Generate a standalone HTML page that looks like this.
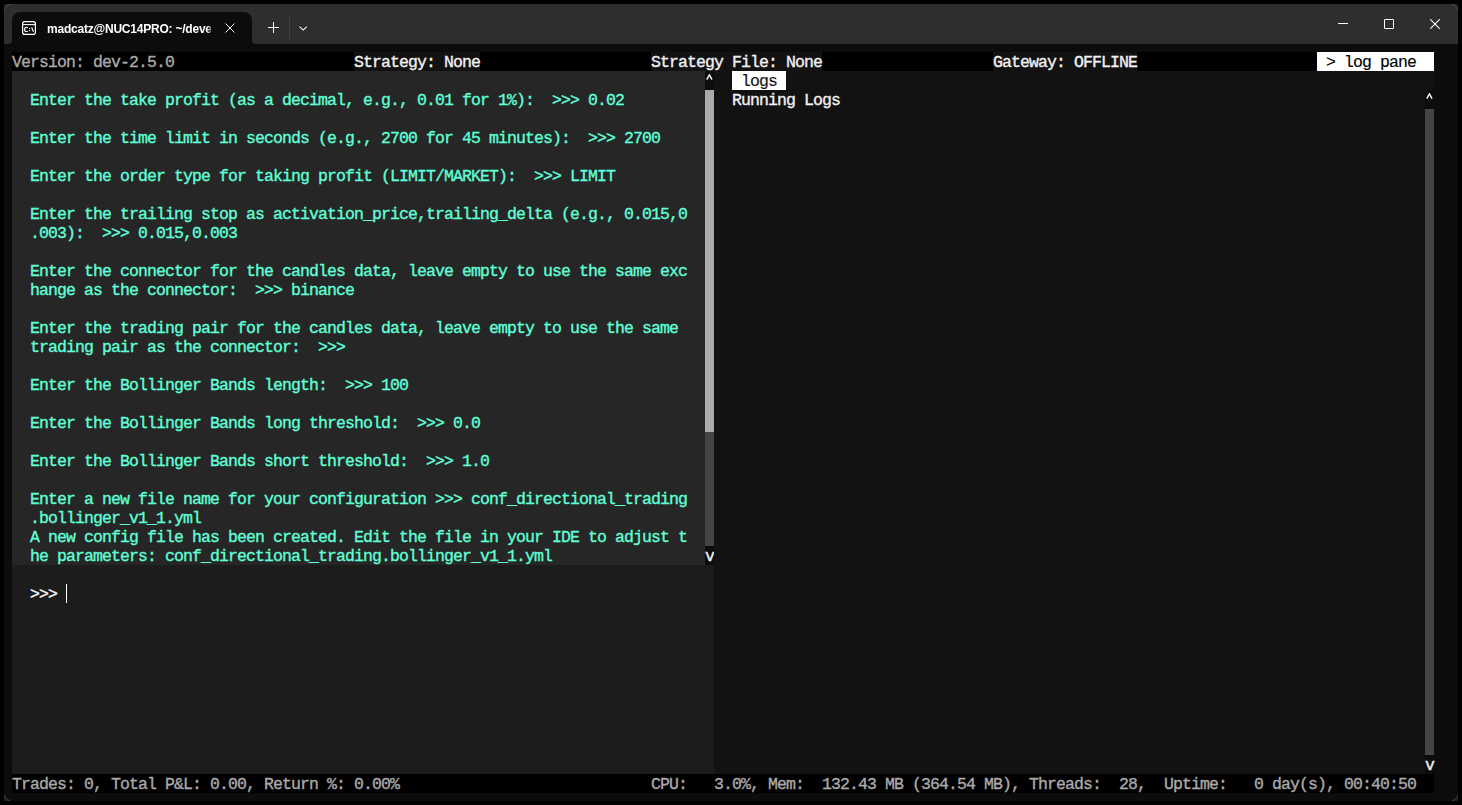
<!DOCTYPE html>
<html><head><meta charset="utf-8"><style>
html,body{margin:0;padding:0;}
body{width:1462px;height:805px;background:#000;position:relative;overflow:hidden;}
#win{position:absolute;left:4px;top:4px;width:1454px;height:797px;background:#0c0c0c;overflow:hidden;}
#term{position:absolute;left:-4px;top:-4px;width:1462px;height:805px;}
#term div{position:absolute;}
.t{font-family:"Liberation Mono",monospace;font-size:16.5px;letter-spacing:-0.9015px;line-height:19px;-webkit-text-stroke:0.35px currentColor;white-space:pre;height:19px;}
#tb{position:absolute;left:0;top:0;width:1454px;height:40px;background:#2e2e2e;}
.abs{position:absolute;}
</style></head><body>
<div id="win">
<div class="abs" style="left:0;top:0;width:8px;height:40px;background:#2e2e2e;border-bottom-right-radius:4px;"></div>
<div class="abs" style="left:8px;top:0;width:240px;height:16px;background:#2e2e2e;"></div>
<div class="abs" style="left:248px;top:0;width:1206px;height:40px;background:#2e2e2e;border-bottom-left-radius:4px;"></div>
<div class="abs" style="left:8px;top:8px;width:240px;height:32px;background:#0c0c0c;border-radius:8px 8px 0 0;"></div>
<!-- tab icon -->
<svg class="abs" style="left:18px;top:17px" width="14" height="14" viewBox="0 0 14 14">
<rect x="0.6" y="0.6" width="12.8" height="12.8" rx="2.2" fill="none" stroke="#fff" stroke-width="1.2"/>
<line x1="0.6" y1="3.6" x2="13.4" y2="3.6" stroke="#fff" stroke-width="1.1"/>
<path d="M5.7 7.0C5.4 6.5 4.9 6.3 4.3 6.3C3.2 6.3 2.6 7.3 2.6 8.5C2.6 9.7 3.2 10.7 4.3 10.7C4.9 10.7 5.4 10.5 5.7 10.0" fill="none" stroke="#fff" stroke-width="1.2"/>
<rect x="7.0" y="7.0" width="1.2" height="1.1" fill="#fff"/><rect x="7.0" y="9.0" width="1.2" height="1.1" fill="#fff"/>
<path d="M9.6 6.5L11.5 10.7" stroke="#fff" stroke-width="1.2"/>
</svg>
<div class="abs" style="left:43px;top:13px;width:164px;height:24px;overflow:hidden;font-family:'Liberation Sans',sans-serif;font-size:12px;font-weight:bold;letter-spacing:-0.22px;color:#fff;line-height:24px;white-space:nowrap;-webkit-mask-image:linear-gradient(to right,#000 160px,rgba(0,0,0,0.5) 164px);">madcatz@NUC14PRO: ~/develop/hummingbot</div>
<!-- tab close -->
<svg class="abs" style="left:221px;top:19px" width="10" height="10" viewBox="0 0 10 10"><path d="M0.5 0.5L9.5 9.5M9.5 0.5L0.5 9.5" stroke="#fff" stroke-width="0.95"/></svg>
<!-- plus -->
<svg class="abs" style="left:264px;top:18px" width="11" height="11" viewBox="0 0 11 11"><path d="M5.5 0V11M0 5.5H11" stroke="#fff" stroke-width="0.95"/></svg>
<div class="abs" style="left:285px;top:12px;width:1px;height:24px;background:#404040;"></div>
<svg class="abs" style="left:295px;top:22px" width="9" height="5" viewBox="0 0 9 5"><path d="M0.6 0.6L4.2 4.1L7.8 0.6" fill="none" stroke="#fff" stroke-width="1.05"/></svg>
<!-- window controls -->
<div class="abs" style="left:1334px;top:19px;width:10px;height:1px;background:#fff;"></div>
<div class="abs" style="left:1380px;top:15px;width:8px;height:8px;border:1px solid #fff;border-radius:1px;"></div>
<svg class="abs" style="left:1426px;top:15px" width="10" height="10" viewBox="0 0 10 10"><path d="M0.3 0.3L9.7 9.7M9.7 0.3L0.3 9.7" stroke="#fff" stroke-width="1.1"/></svg>
<div id="term">
<div style="left:12px;top:52px;width:1422px;height:19px;background:#000000;"></div>
<div class="t" style="left:12px;top:53px;color:#aaaaaa;">Version: dev-2.5.0</div>
<div style="left:354px;top:52px;width:126px;height:19px;background:#121212;"></div>
<div class="t" style="left:354px;top:53px;color:#f2f2f2;">Strategy: None</div>
<div style="left:651px;top:52px;width:171px;height:19px;background:#121212;"></div>
<div class="t" style="left:651px;top:53px;color:#f2f2f2;">Strategy File: None</div>
<div style="left:993px;top:52px;width:144px;height:19px;background:#121212;"></div>
<div class="t" style="left:993px;top:53px;color:#f2f2f2;">Gateway: OFFLINE</div>
<div style="left:1317px;top:52px;width:117px;height:19px;background:#ffffff;"></div>
<div class="t" style="left:1317px;top:53px;color:#000000;-webkit-text-stroke:0.15px #000;"> &gt; log pane  </div>
<div style="left:12px;top:71px;width:693px;height:494px;background:#262626;"></div>
<div class="t" style="left:30px;top:91px;color:#5fffd7;">Enter the take profit (as a decimal, e.g., 0.01 for 1%):  &gt;&gt;&gt; 0.02</div>
<div class="t" style="left:30px;top:129px;color:#5fffd7;">Enter the time limit in seconds (e.g., 2700 for 45 minutes):  &gt;&gt;&gt; 2700</div>
<div class="t" style="left:30px;top:167px;color:#5fffd7;">Enter the order type for taking profit (LIMIT/MARKET):  &gt;&gt;&gt; LIMIT</div>
<div class="t" style="left:30px;top:205px;color:#5fffd7;">Enter the trailing stop as activation_price,trailing_delta (e.g., 0.015,0</div>
<div class="t" style="left:30px;top:224px;color:#5fffd7;">.003):  &gt;&gt;&gt; 0.015,0.003</div>
<div class="t" style="left:30px;top:262px;color:#5fffd7;">Enter the connector for the candles data, leave empty to use the same exc</div>
<div class="t" style="left:30px;top:281px;color:#5fffd7;">hange as the connector:  &gt;&gt;&gt; binance</div>
<div class="t" style="left:30px;top:319px;color:#5fffd7;">Enter the trading pair for the candles data, leave empty to use the same</div>
<div class="t" style="left:30px;top:338px;color:#5fffd7;">trading pair as the connector:  &gt;&gt;&gt;</div>
<div class="t" style="left:30px;top:376px;color:#5fffd7;">Enter the Bollinger Bands length:  &gt;&gt;&gt; 100</div>
<div class="t" style="left:30px;top:414px;color:#5fffd7;">Enter the Bollinger Bands long threshold:  &gt;&gt;&gt; 0.0</div>
<div class="t" style="left:30px;top:452px;color:#5fffd7;">Enter the Bollinger Bands short threshold:  &gt;&gt;&gt; 1.0</div>
<div class="t" style="left:30px;top:490px;color:#5fffd7;">Enter a new file name for your configuration &gt;&gt;&gt; conf_directional_trading</div>
<div class="t" style="left:30px;top:509px;color:#5fffd7;">.bollinger_v1_1.yml</div>
<div class="t" style="left:30px;top:528px;color:#5fffd7;">A new config file has been created. Edit the file in your IDE to adjust t</div>
<div class="t" style="left:30px;top:547px;color:#5fffd7;">he parameters: conf_directional_trading.bollinger_v1_1.yml</div>
<div style="left:705px;top:71px;width:9px;height:19px;background:#0c0c0c;"></div>
<svg style="position:absolute;left:706.2px;top:74.2px" width="7" height="7" viewBox="0 0 7 7"><path d="M0.8 5.6L3.4 0.8L6.0 5.6" fill="none" stroke="#f2f2f2" stroke-width="1.5"/></svg>
<div style="left:705px;top:90px;width:9px;height:342px;background:#aaaaaa;"></div>
<div style="left:705px;top:432px;width:9px;height:114px;background:#444444;"></div>
<div style="left:705px;top:546px;width:9px;height:19px;background:#0c0c0c;"></div>
<div class="t" style="left:705px;top:547px;color:#f2f2f2;">v</div>
<div style="left:12px;top:565px;width:702px;height:209px;background:#1c1c1c;"></div>
<div class="t" style="left:30px;top:585px;color:#f2f2f2;">&gt;&gt;&gt;</div>
<div style="left:66px;top:584px;width:1px;height:19px;background:#ffffff;"></div>
<div style="left:714px;top:71px;width:720px;height:703px;background:#121212;"></div>
<div style="left:732px;top:71px;width:54px;height:19px;background:#ffffff;"></div>
<div class="t" style="left:732px;top:72px;color:#121212;-webkit-text-stroke:0.15px #121212;"> logs </div>
<div class="t" style="left:732px;top:91px;color:#f2f2f2;">Running Logs</div>
<div style="left:1425px;top:90px;width:9px;height:19px;background:#0c0c0c;"></div>
<svg style="position:absolute;left:1426.2px;top:93.2px" width="7" height="7" viewBox="0 0 7 7"><path d="M0.8 5.6L3.4 0.8L6.0 5.6" fill="none" stroke="#f2f2f2" stroke-width="1.5"/></svg>
<div style="left:1425px;top:109px;width:9px;height:646px;background:#444444;"></div>
<div style="left:1425px;top:755px;width:9px;height:19px;background:#0c0c0c;"></div>
<div class="t" style="left:1425px;top:756px;color:#f2f2f2;">v</div>
<div style="left:12px;top:774px;width:1422px;height:19px;background:#000000;"></div>
<div class="t" style="left:12px;top:775px;color:#aaaaaa;">Trades: 0, Total P&amp;L: 0.00, Return %: 0.00%</div>
<div class="t" style="left:651px;top:775px;color:#aaaaaa;">CPU:   3.0%, Mem:  132.43 MB (364.54 MB), Threads:  28,  Uptime:   0 day(s), 00:40:50</div>
</div>
<svg class="abs" style="left:0;top:0" width="6" height="6" viewBox="0 0 6 6"><rect width="6" height="6" fill="#1b1f2b"/><path d="M6 0.5A5.5 5.5 0 0 0 0.5 6L6 6Z" fill="#2e2e2e"/><path d="M6 0.5A5.5 5.5 0 0 0 0.5 6" fill="none" stroke="#4d5056" stroke-width="1"/></svg>
<svg class="abs" style="left:1448px;top:0" width="6" height="6" viewBox="0 0 6 6"><rect width="6" height="6" fill="#1b1f2b"/><path d="M0 0.5A5.5 5.5 0 0 1 5.5 6L0 6Z" fill="#2e2e2e"/><path d="M0 0.5A5.5 5.5 0 0 1 5.5 6" fill="none" stroke="#4d5056" stroke-width="1"/></svg>
<svg class="abs" style="left:0;top:791px" width="6" height="6" viewBox="0 0 6 6"><rect width="6" height="6" fill="#1b1f2b"/><path d="M6 5.5A5.5 5.5 0 0 1 0.5 0L6 0Z" fill="#0c0c0c"/><path d="M6 5.5A5.5 5.5 0 0 1 0.5 0" fill="none" stroke="#3d4046" stroke-width="1"/></svg>
<svg class="abs" style="left:1448px;top:791px" width="6" height="6" viewBox="0 0 6 6"><rect width="6" height="6" fill="#1b1f2b"/><path d="M0 5.5A5.5 5.5 0 0 0 5.5 0L0 0Z" fill="#0c0c0c"/><path d="M0 5.5A5.5 5.5 0 0 0 5.5 0" fill="none" stroke="#3d4046" stroke-width="1"/></svg>
</div>
</body></html>
